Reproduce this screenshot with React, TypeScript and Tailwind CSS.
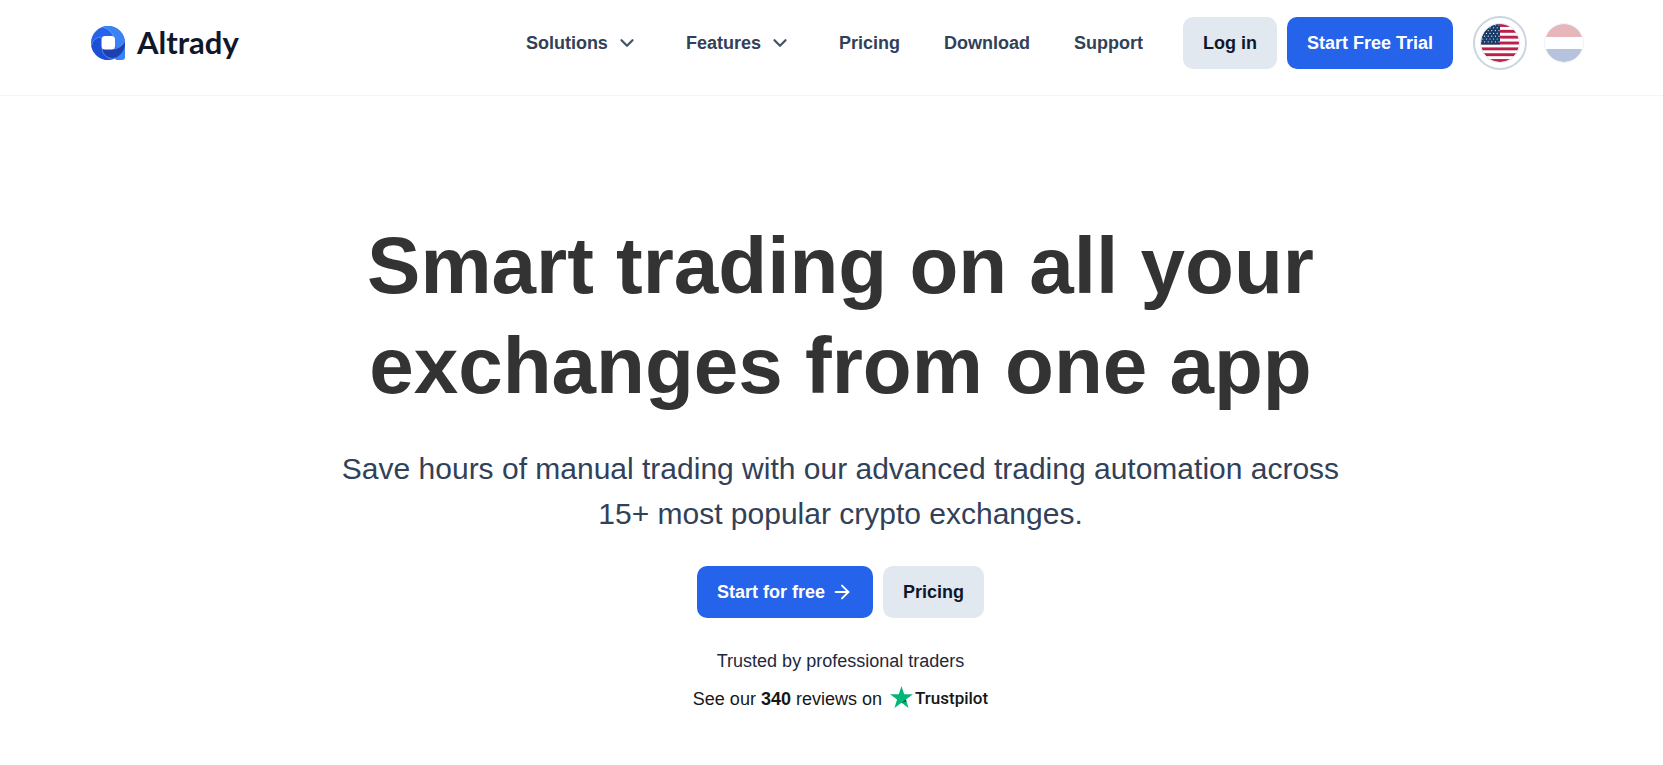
import React from "react";
import { ChevronDown, ArrowRight } from "lucide-react";

const solid = "flex h-[52px] items-center rounded-[10px] px-5 font-bold";

function LogoMark() {
  return (
    <svg viewBox="0 0 34 34" className="size-[34px]" aria-hidden="true">
      <path d="M34 15V31q0 3-3 3h-6l-3-6z" fill="#3b82f6" />
      <circle cx="17" cy="17" r="17" fill="#2563eb" />
      <path d="M11.500 0.900A17 17 0 0 1 34 16l-5 6-6-1V12Q21 4 11.500 0.900z" fill="#3b82f6" />
      <path d="M0.300 20Q2 11 11 11V22q0 8 10 11.500A17 17 0 0 1 0.300 20z" fill="#1d4ed8" />
      <path d="M11 22q5 1 11.500 1Q31 22 34 14.500 34.500 24 28.500 29q-4 3.500-9 2.500-8-1.500-8.500-9.500z" fill="#1e40af" />
      <path d="M0.300 20Q2 11 11 11M21 33.500Q11 30 11 22M34 14.500Q31 22 22.500 23M11.500 0.900Q21 4 23 12" fill="none" stroke="#8fb2f6" strokeWidth="0.500" />
      <rect x="10.500" y="10" width="13.500" height="13.500" rx="3.500" fill="#fff" />
    </svg>
  );
}

function UsFlag() {
  const stars = [];
  for (let r = 0; r < 7; r++)
    for (let c = 0; c < 6; c++)
      stars.push(<circle key={`${r}-${c}`} cx={1 + c * 3.6 + (r % 2) * 1.8} cy={2 + r * 2.8} r="0.600" fill="#fff" />);
  return (
    <svg viewBox="0 0 40 40" className="size-10" role="img" aria-label="English">
      <clipPath id="us"><circle cx="20" cy="20" r="19" /></clipPath>
      <g clipPath="url(#us)">
        <rect width="40" height="40" fill="#fff" />
        {[0, 1, 2, 3, 4, 5, 6].map((i) => (
          <rect key={i} y={1 + i * 5.85} width="40" height="2.925" fill="#b9204a" />
        ))}
        <rect width="20" height="21.500" fill="#173c68" />
        {stars}
      </g>
      <circle cx="20" cy="20" r="19.500" fill="none" stroke="#dfe6ee" />
    </svg>
  );
}

function NlFlag() {
  return (
    <svg viewBox="0 0 40 40" className="size-10" role="img" aria-label="Nederlands">
      <clipPath id="nl"><circle cx="20" cy="20" r="19" /></clipPath>
      <g clipPath="url(#nl)">
        <rect width="40" height="40" fill="#fff" />
        <rect width="40" height="14" fill="#e6b6bb" />
        <rect y="26" width="40" height="14" fill="#b6c3dc" />
      </g>
      <circle cx="20" cy="20" r="19.500" fill="none" stroke="#eef1f5" />
    </svg>
  );
}

export default function App() {
  return (
    <div className="min-h-screen bg-white font-['Liberation_Sans',Arial,sans-serif] text-[18px] text-slate-900">
      <header className="flex h-24 items-start justify-between border-b border-gray-100 pt-4 pr-[72px] pl-[91px]">
        <a href="#" className="flex h-[54px] items-center gap-3">
          <LogoMark />
          <span className="pb-[2px] font-['Lato',sans-serif] text-[31px] leading-9 font-bold">Altrady</span>
        </a>
        <div className="flex items-center">
          <nav className="mr-10 flex items-center gap-11 font-bold text-slate-700">
            <button className="flex items-center gap-2 pr-1">Solutions <ChevronDown className="size-[22px] text-slate-600" strokeWidth={2.5} /></button>
            <button className="flex items-center gap-2 pr-1">Features <ChevronDown className="size-[22px] text-slate-600" strokeWidth={2.5} /></button>
            <a href="#">Pricing</a>
            <a href="#">Download</a>
            <a href="#">Support</a>
          </nav>
          <div className="mr-5 flex gap-[10px]">
            <a href="#" className={`${solid} bg-slate-200`}>Log in</a>
            <a href="#" className={`${solid} bg-[#2563eb] text-white`}>Start Free Trial</a>
          </div>
          <div className="flex gap-[10px]">
            <a href="#" className="flex size-[54px] items-center justify-center rounded-full border-2 border-slate-300"><UsFlag /></a>
            <a href="#" className="flex size-[54px] items-center justify-center rounded-full"><NlFlag /></a>
          </div>
        </div>
      </header>

      <main className="flex flex-col items-center pt-[120px] pl-[18px] text-center">
        <h1 className="max-w-[1000px] text-[80px] leading-[100px] font-bold text-[#333]">
          Smart trading on all your exchanges from one app
        </h1>
        <p className="mt-[30px] max-w-[1020px] text-[30px] leading-[45px] text-slate-700">
          Save hours of manual trading with our advanced trading automation across 15+ most popular crypto exchanges.
        </p>
        <div className="mt-[30px] flex gap-[10px]">
          <a href="#" className={`${solid} gap-[6px] bg-[#2563eb] text-white`}>Start for free <ArrowRight className="size-[22px]" /></a>
          <a href="#" className={`${solid} bg-slate-200`}>Pricing</a>
        </div>
        <p className="mt-[30px] leading-[26px] text-slate-800">Trusted by professional traders</p>
        <a href="#" className="mt-3 flex h-[26px] items-center gap-2 text-neutral-900">
          <span>See our <b>340</b> reviews on</span>
          <span className="flex items-center gap-[2px]">
            <svg viewBox="0 0 24 23" className="mb-1 h-[22px] w-[23px]" aria-hidden="true">
              <path d="M12 0l2.800 8.700H24l-7.400 5.400L19.400 23 12 17.500 4.600 23l2.800-8.900L0 8.700h9.200z" fill="#00b67a" />
              <path d="M17.200 16.100l-.6-2L12 17.500z" fill="#005128" />
            </svg>
            <span className="font-['Roboto',sans-serif] text-[17px] font-medium">Trustpilot</span>
          </span>
        </a>
      </main>
    </div>
  );
}
